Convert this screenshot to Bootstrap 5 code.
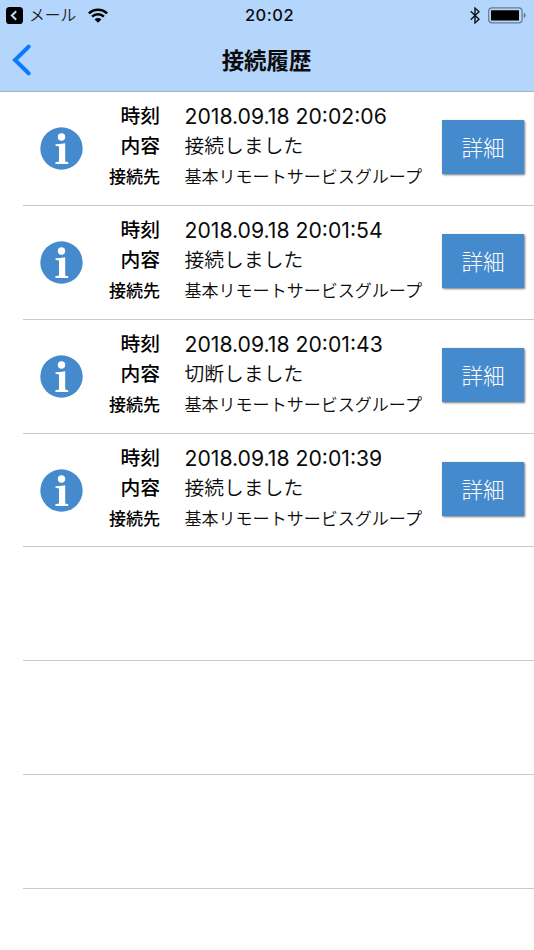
<!DOCTYPE html>
<html lang="ja">
<head>
<meta charset="utf-8">
<meta name="viewport" content="width=device-width, initial-scale=1">
<title>接続履歴</title>
<link href="https://cdn.jsdelivr.net/npm/bootstrap@5.3.0/dist/css/bootstrap.min.css" rel="stylesheet">
<style>
body{font-family:Inter,"Noto Sans CJK JP",sans-serif;color:#0b0b0b;width:534px;height:950px;overflow:hidden;background:#fff}
.top-area{height:92px;background:#b5d6fc;border-bottom:1px solid #a9b3bf}
.status-line{height:30px;padding:0 7px 0 6px;display:grid;grid-template-columns:1fr auto 1fr}
.mail-label{font-size:15.8px;font-weight:350;margin-left:6px;padding-top:1px;color:#222;line-height:30px}
.wifi-icon{margin-left:12px}
.clock{font-size:16.5px;font-weight:500;letter-spacing:.5px;line-height:30px;padding-left:6px}
.title-line{height:61px;display:grid;grid-template-columns:60px 1fr 60px}
.page-title{font-size:22.4px;font-weight:600;line-height:61px;text-align:center;padding-right:1px}
.back-btn{padding:0 0 2px 12px;border:0;background:none;line-height:1}
.entry{height:113.85px;margin-left:23px;border-bottom:1px solid #c9c9cb;border-radius:0;padding:0 10px 0 17px}
.info-icon{width:43px;height:43px;margin-top:35px}
.labels{width:77px;text-align:right;font-weight:500;padding-top:9px;color:#000}
.values{padding-top:9px;margin-left:24.5px;width:257px;white-space:nowrap}
.l1,.l2{font-size:19.8px;line-height:30px;height:30px}
.l3{font-size:17.05px;line-height:32px;height:32px}
.values .l2,.values .l3{font-weight:350}
.values .stamp{font-size:21.2px}
.detail-btn{width:82px;height:54px;margin-top:28px;background:#458acd;color:#fff;border:0;border-radius:0;font-size:21.6px;font-weight:300;padding:4px 0 0 1px;line-height:1;box-shadow:1px 1px 2px #777}
.detail-btn:hover{background:#3b7dbd;color:#fff}
</style>
</head>
<body>
<header class="top-area">
  <div class="status-line">
    <div class="d-flex align-items-center">
      <svg width="17" height="17" viewBox="0 0 17 17"><rect width="17" height="17" rx="3.6" fill="#000"/><path d="M10.2 4.2 5.8 8.5l4.4 4.3" fill="none" stroke="#c6e0fd" stroke-width="1.9"/></svg>
      <span class="mail-label">メール</span>
      <svg class="wifi-icon" width="20" height="15" viewBox="0 0 20 15"><g fill="none" stroke="#000" stroke-width="2.5"><path d="M.9 5.4a13 13 0 0 1 18.2 0"/><path d="M4.1 8.7a8.4 8.4 0 0 1 11.8 0"/></g><path d="M6.6 11.4a4.9 4.9 0 0 1 6.8 0L10 14.8z"/></svg>
    </div>
    <div class="clock">20:02</div>
    <div class="d-flex align-items-center justify-content-end">
      <svg width="10" height="17" viewBox="0 0 10 17"><path d="M.7 4.3 9 12.2l-4 3.7V1.1l4 3.7-8.3 7.9" fill="none" stroke="#111" stroke-width="1.4"/></svg>
      <svg class="ms-2" width="39" height="17" viewBox="0 0 39 17"><rect x=".7" y=".9" width="33.4" height="15" rx="3.4" fill="none" stroke="#67798e" stroke-width="1.2"/><rect x="3" y="3.2" width="28" height="10.4" rx=".6"/><path d="M35.7 5.8q2 .8 2 2.6t-2 2.6z" fill="#67798e"/></svg>
    </div>
  </div>
  <div class="title-line">
    <button class="back-btn d-flex align-items-center" aria-label="戻る"><svg width="20" height="32" viewBox="0 0 20 32"><path d="M16.6 2.7 3 16l13.6 13.3" fill="none" stroke="#087bff" stroke-width="4" stroke-linecap="round" stroke-linejoin="miter"/></svg></button>
    <h1 class="page-title m-0">接続履歴</h1>
  </div>
</header>
<main class="list-group list-group-flush rounded-0">
  <div class="entry d-flex align-items-start">
    <svg class="info-icon flex-shrink-0" viewBox="0 0 43 43"><circle cx="21.5" cy="21.5" r="21.2" fill="#458acd"/><circle cx="21.5" cy="10" r="3.7" fill="#fff"/><path d="M15.5 17.2q4-.1 9.7-.9v18.3l3 .7v1.6H15.4v-1.6l3.6-.7V19.5l-3.5-.7z" fill="#fff"/></svg>
    <div class="labels flex-shrink-0"><div class="l1">時刻</div><div class="l2">内容</div><div class="l3">接続先</div></div>
    <div class="values flex-shrink-0"><div class="l1 stamp">2018.09.18 20:02:06</div><div class="l2">接続しました</div><div class="l3">基本リモートサービスグループ</div></div>
    <button class="btn detail-btn flex-shrink-0">詳細</button>
  </div>
  <div class="entry d-flex align-items-start">
    <svg class="info-icon flex-shrink-0" viewBox="0 0 43 43"><circle cx="21.5" cy="21.5" r="21.2" fill="#458acd"/><circle cx="21.5" cy="10" r="3.7" fill="#fff"/><path d="M15.5 17.2q4-.1 9.7-.9v18.3l3 .7v1.6H15.4v-1.6l3.6-.7V19.5l-3.5-.7z" fill="#fff"/></svg>
    <div class="labels flex-shrink-0"><div class="l1">時刻</div><div class="l2">内容</div><div class="l3">接続先</div></div>
    <div class="values flex-shrink-0"><div class="l1 stamp">2018.09.18 20:01:54</div><div class="l2">接続しました</div><div class="l3">基本リモートサービスグループ</div></div>
    <button class="btn detail-btn flex-shrink-0">詳細</button>
  </div>
  <div class="entry d-flex align-items-start">
    <svg class="info-icon flex-shrink-0" viewBox="0 0 43 43"><circle cx="21.5" cy="21.5" r="21.2" fill="#458acd"/><circle cx="21.5" cy="10" r="3.7" fill="#fff"/><path d="M15.5 17.2q4-.1 9.7-.9v18.3l3 .7v1.6H15.4v-1.6l3.6-.7V19.5l-3.5-.7z" fill="#fff"/></svg>
    <div class="labels flex-shrink-0"><div class="l1">時刻</div><div class="l2">内容</div><div class="l3">接続先</div></div>
    <div class="values flex-shrink-0"><div class="l1 stamp">2018.09.18 20:01:43</div><div class="l2">切断しました</div><div class="l3">基本リモートサービスグループ</div></div>
    <button class="btn detail-btn flex-shrink-0">詳細</button>
  </div>
  <div class="entry d-flex align-items-start">
    <svg class="info-icon flex-shrink-0" viewBox="0 0 43 43"><circle cx="21.5" cy="21.5" r="21.2" fill="#458acd"/><circle cx="21.5" cy="10" r="3.7" fill="#fff"/><path d="M15.5 17.2q4-.1 9.7-.9v18.3l3 .7v1.6H15.4v-1.6l3.6-.7V19.5l-3.5-.7z" fill="#fff"/></svg>
    <div class="labels flex-shrink-0"><div class="l1">時刻</div><div class="l2">内容</div><div class="l3">接続先</div></div>
    <div class="values flex-shrink-0"><div class="l1 stamp">2018.09.18 20:01:39</div><div class="l2">接続しました</div><div class="l3">基本リモートサービスグループ</div></div>
    <button class="btn detail-btn flex-shrink-0">詳細</button>
  </div>
  <div class="entry"></div>
  <div class="entry"></div>
  <div class="entry"></div>
</main>
<script src="https://cdn.jsdelivr.net/npm/bootstrap@5.3.0/dist/js/bootstrap.bundle.min.js"></script>
</body>
</html>
